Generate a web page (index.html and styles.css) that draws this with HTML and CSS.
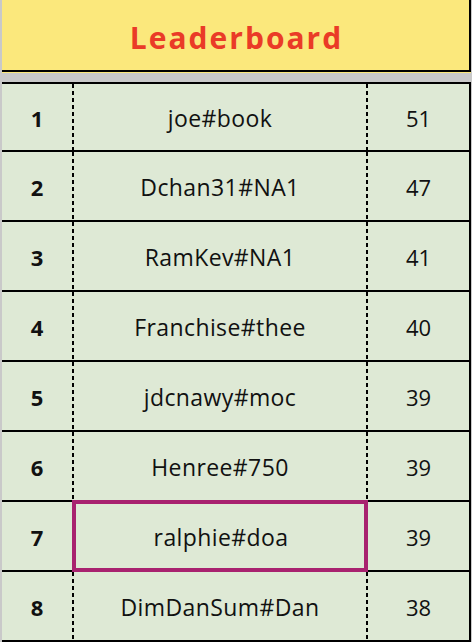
FILE: index.html
```html
<!DOCTYPE html>
<html>
<head>
<meta charset="utf-8">
<link rel="stylesheet" href="styles.css">
</head>
<body>
<div class="board">
  <div class="header"><h1 class="title">Leaderboard</h1></div>
  <div class="table">
    <div class="row first"><div class="rank">1</div><div class="name">joe#book</div><div class="score">51</div></div>
    <div class="row"><div class="rank">2</div><div class="name">Dchan31#NA1</div><div class="score">47</div></div>
    <div class="row"><div class="rank">3</div><div class="name">RamKev#NA1</div><div class="score">41</div></div>
    <div class="row"><div class="rank">4</div><div class="name">Franchise#thee</div><div class="score">40</div></div>
    <div class="row"><div class="rank">5</div><div class="name">jdcnawy#moc</div><div class="score">39</div></div>
    <div class="row"><div class="rank">6</div><div class="name">Henree#750</div><div class="score">39</div></div>
    <div class="row"><div class="rank">7</div><div class="name selected">ralphie#doa</div><div class="score">39</div></div>
    <div class="row"><div class="rank">8</div><div class="name">DimDanSum#Dan</div><div class="score">38</div></div>
  </div>
</div>
</body>
</html>
```
FILE: styles.css
```css
html, body {
  margin: 0;
  padding: 0;
  background: #c9c9c9;
  height: 642px;
  overflow: hidden;
}
body {
  font-family: "Open Sans", "Noto Sans", sans-serif;
  color: #111;
}
.board {
  margin-left: 2px;
  width: 469px;
}
.header {
  height: 70px;
  background: #fbe87c;
  border-right: 2px solid #000;
  border-bottom: 2px solid #000;
  box-shadow: 0 1px 0 #fbe87c;
  display: flex;
  align-items: center;
  justify-content: center;
}
.title {
  margin: 0;
  font-size: 30px;
  font-weight: 700;
  color: #ea3b27;
  letter-spacing: 2px;
  padding-left: 2px;
  padding-top: 4px;
}
.table {
  margin-top: 10px;
  border-top: 2px solid #000;
  border-right: 2px solid #000;
  background: #dee9d5;
}
.row {
  display: grid;
  grid-template-columns: 70px 294px 103px;
  height: 68px;
  border-bottom: 2px solid #000;
  font-size: 22px;
}
.row.first {
  height: 66px;
}
.row > div {
  display: flex;
  align-items: center;
  justify-content: center;
  padding-top: 1px;
}
.rank {
  font-weight: 700;
}
.name {
  font-size: 23px;
  letter-spacing: 0.4px;
}
.name, .score {
  background: repeating-linear-gradient(to bottom, #000 0 4px, transparent 4px 7px) left top / 2px 100% no-repeat;
  padding-left: 2px;
}
.name.selected {
  background: none;
  box-shadow: inset 0 0 0 4px #a8226f;
  margin: -2px -2px -2px 0;
  position: relative;
}
```
